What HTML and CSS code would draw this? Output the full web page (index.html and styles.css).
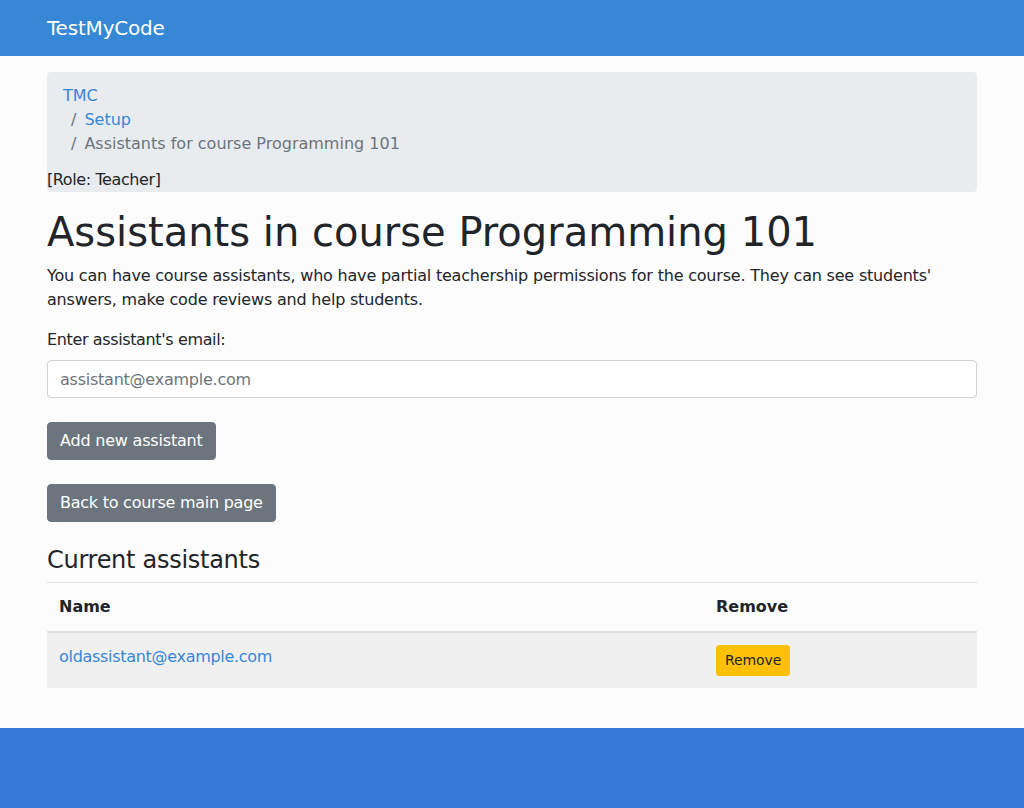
FILE: index.html
```html
<!DOCTYPE html>
<html lang="en">
<head>
<meta charset="utf-8">
<title>Assistants in course Programming 101</title>
<link rel="stylesheet" href="styles.css">
</head>
<body>
<header class="navbar">
  <div class="container">
    <a class="brand" href="#">TestMyCode</a>
  </div>
</header>
<main class="main">
  <div class="container">
    <div class="crumbs">
      <ol class="breadcrumb">
        <li class="crumb"><a href="#">TMC</a></li>
        <li class="crumb"><a href="#">Setup</a></li>
        <li class="crumb active">Assistants for course Programming 101</li>
      </ol>
      <div class="role">[Role: Teacher]</div>
    </div>

    <h1 class="title">Assistants in course Programming 101</h1>
    <p class="lead">You can have course assistants, who have partial teachership permissions for the course. They can see students' answers, make code reviews and help students.</p>

    <form class="add-form">
      <label class="label" for="email">Enter assistant's email:</label>
      <input class="input" id="email" type="text" placeholder="assistant@example.com">
      <button class="btn btn-secondary" type="button">Add new assistant</button>
    </form>

    <div class="back">
      <a class="btn btn-secondary" href="#">Back to course main page</a>
    </div>

    <h4 class="subtitle">Current assistants</h4>
    <table class="table">
      <thead>
        <tr><th class="col-name">Name</th><th>Remove</th></tr>
      </thead>
      <tbody>
        <tr>
          <td><a class="user-link" href="#">oldassistant@example.com</a></td>
          <td><button class="btn btn-warning btn-sm" type="button">Remove</button></td>
        </tr>
      </tbody>
    </table>
  </div>
</main>
<footer class="footer"></footer>
</body>
</html>
```

FILE: styles.css
```css
* { box-sizing: border-box; }

html, body {
  margin: 0;
  padding: 0;
}

body {
  font-family: "DejaVu Sans", sans-serif;
  font-size: 16px;
  line-height: 1.5;
  color: #212529;
  background: #fcfcfc;
  display: flex;
  flex-direction: column;
  min-height: 808px;
}

a {
  color: #3687d6;
  text-decoration: none;
}

.container {
  width: 960px;
  margin: 0 auto;
  padding: 0 15px;
}

.navbar {
  background: #3687d6;
  height: 56px;
  display: flex;
  align-items: center;
}

.brand {
  color: #fff;
  font-size: 20px;
  line-height: 30px;
  letter-spacing: -0.2px;
}

.main {
  flex: 1;
  padding-top: 16px;
  padding-bottom: 24px;
}

.crumbs {
  background: #e9ecef;
  border-radius: 4px;
  margin-bottom: 16px;
}

.breadcrumb {
  list-style: none;
  margin: 0;
  padding: 12px 16px;
}

.crumb + .crumb {
  padding-left: 8px;
}

.crumb + .crumb::before {
  content: "/";
  color: #6c757d;
  padding-right: 8px;
}

.crumb.active {
  color: #6c757d;
}

.role {
  line-height: 24px;
  letter-spacing: -0.4px;
}

.title {
  font-size: 40px;
  font-weight: 500;
  line-height: 1.2;
  margin: 0 0 8px;
}

.lead {
  margin: 0 0 16px;
  letter-spacing: -0.2px;
}

.add-form {
  margin: 0 0 24px;
}

.label {
  display: block;
  margin-bottom: 8px;
  letter-spacing: -0.37px;
}

.input {
  display: block;
  width: 100%;
  height: 38px;
  padding: 6px 12px;
  font-family: inherit;
  font-size: 16px;
  line-height: 1.5;
  letter-spacing: -0.24px;
  color: #495057;
  background: #fff;
  border: 1px solid #ced4da;
  border-radius: 4px;
  margin-bottom: 24px;
}

.input::placeholder {
  color: #6c757d;
}

.btn {
  display: inline-block;
  font-family: inherit;
  font-size: 16px;
  line-height: 1.5;
  letter-spacing: -0.2px;
  padding: 6px 12px;
  border: 1px solid transparent;
  border-radius: 4px;
  cursor: pointer;
}

.btn-secondary {
  background: #6c757d;
  border-color: #6c757d;
  color: #fff;
}

.btn-warning {
  background: #ffc107;
  border-color: #ffc107;
  color: #212529;
}

.btn-sm {
  font-size: 14px;
  padding: 4px 8px;
  border-radius: 3px;
  letter-spacing: -0.1px;
}

.back {
  margin-bottom: 24px;
}

.back .btn {
  letter-spacing: -0.25px;
}

.subtitle {
  font-size: 24px;
  font-weight: 500;
  line-height: 28px;
  letter-spacing: -0.28px;
  margin: 0 0 8px;
}

.table {
  width: 100%;
  border-collapse: collapse;
  margin-bottom: 16px;
}

.table th,
.table td {
  padding: 12px;
  text-align: left;
  vertical-align: top;
  border-top: 1px solid #dee2e6;
}

.table th {
  font-weight: bold;
  border-bottom: 2px solid #dee2e6;
}

.table .col-name {
  width: 657px;
}

.user-link {
  letter-spacing: -0.3px;
}

.table tbody tr:nth-child(odd) {
  background: #f0f0f0;
}

.table tbody tr:first-child td {
  border-top: 0;
}

.footer {
  background: #3777d6;
  height: 80px;
}
```
